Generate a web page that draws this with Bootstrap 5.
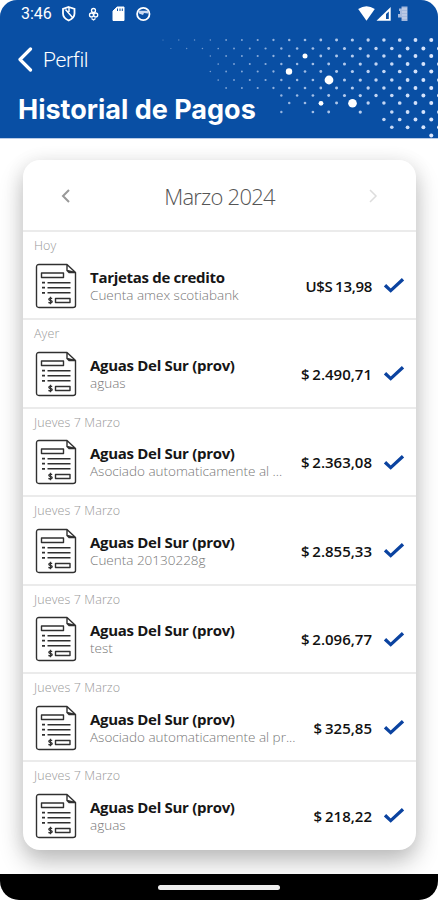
<!DOCTYPE html>
<html lang="es">
<head>
<meta charset="utf-8">
<meta name="viewport" content="width=device-width, initial-scale=1">
<title>Historial de Pagos</title>
<link href="https://cdn.jsdelivr.net/npm/bootstrap@5.3.0/dist/css/bootstrap.min.css" rel="stylesheet">
<style>
body{font-family:"Open Sans","Noto Sans",sans-serif;background:#fff;color:#111}
.screen{width:438px;height:900px;border-radius:17px 17px 19px 19px;background:#fff}
.app-head{height:138px;background:#094fa4;box-shadow:0 1px 0 #b9cbe6}
.dots{top:0;left:0}
.status{height:28px;padding:0 28px 0 21px;font:400 16px/28px Roboto,sans-serif}
.back{height:30px;margin-top:17px;padding-left:17px;font:300 21px/30px Roboto,sans-serif}
.back span{letter-spacing:-.35px}
.page-title{font:700 27px/34px Inter,sans-serif;letter-spacing:0;margin:18px 0 0 18px}
.body-area{padding:22px 22px 24px 23px}
.sheet{border-radius:17px;box-shadow:0 12px 24px rgba(0,0,0,.24),0 2px 20px rgba(0,0,0,.08);height:690px}
.month{height:70px;padding:1px 36px 0}
.month span{font:300 22px/30px "Open Sans",sans-serif;letter-spacing:-.75px;color:#555}
.pay{height:88.4px;border-top:2px solid #ebebeb;padding:5px 11px 0 12px}
.day{font-weight:300;font-size:12.5px;line-height:17px;color:#999;margin-left:-1px;letter-spacing:.1px}
.entry{margin-top:8.600px;height:46px}
.info{width:206px;margin-left:13px}
.name{font-weight:700;font-size:15px;line-height:18px;letter-spacing:-.3px;color:#161616}
.desc{font-weight:300;font-size:13.5px;line-height:18px;letter-spacing:0;color:#777}
.amount{font-weight:600;font-size:15px;line-height:20px;letter-spacing:0;word-spacing:-1px;margin-right:11px}
.amount-usd{letter-spacing:-.3px}
.home{height:26px;background:#000}
.home div{width:122px;height:5px;background:#eee;border-radius:3px}
</style>
</head>
<body>
<svg width="0" height="0" class="position-absolute">
<symbol id="doc" viewBox="0 0 42 46"><g fill="none" stroke="#303030" stroke-width="1.4" stroke-linejoin="round"><path d="M4 1.5H32L40.500 9.500V42.500Q40.500 44.500 38 44.500H4Q1.500 44.500 1.500 42V4Q1.500 1.500 4 1.500ZM32 1.500V7.500L40 9.500M32 7.500L34 9.500H40"/><path d="M6.500 10H28.500V14.500H6.500ZM20.500 35.500H35V39.500H20.500Z"/><path d="M12.500 19.700H35.500M12.500 24.700H35.500M12.500 29.800H35.500"/><path stroke-width="1.800" d="M7 19.700h3M7 24.700h3M7 29.800h3"/><path d="M17.200 35.500C15 34.400 13.400 35.600 14 36.700 14.600 37.800 17 37.200 17.200 38.600 17.300 40 15 40.300 13.400 39.400M15.500 33.800V41.300" stroke-width="1.300"/></g></symbol>
<symbol id="tick" viewBox="0 0 22 17"><path d="M2 8.200L7.700 13.600L20 2.200" fill="none" stroke="#0b43a0" stroke-width="3.300"/></symbol>
</svg>
<div class="screen d-flex flex-column overflow-hidden">
<header class="app-head position-relative text-white flex-shrink-0">
<svg class="dots position-absolute" width="438" height="138" fill="#dfeaff" aria-hidden="true"></svg>
<div class="status position-relative d-flex align-items-center">
<span>3:46</span>
<svg width="100" height="20" viewBox="57 4 100 20" fill="none" stroke="#fff" class="ms-1"><path d="M69.700 7L75.500 9V13.500Q75.500 18 69.700 20.500Q64 18 64 13.500V9Z" stroke-width="1.800"/><path d="M66.500 9.500L73.500 17.500M70 8V12" stroke-width="1.500"/><g stroke-width="1.300"><circle cx="94.500" cy="10.500" r="2"/><circle cx="92.500" cy="15" r="2"/><circle cx="96.700" cy="15" r="2"/><path d="M92.500 18.500L94.500 20L96.500 18.500"/></g><path d="M118.200 7H125V20.500H114V11Z" fill="#fff" stroke-width="1"/><path d="M118.500 8.500V11M121 8.500V11M123.300 8.500V11" stroke="#094fa4"/><circle cx="144.300" cy="14" r="6.200" stroke-width="1.800"/><path d="M139 10.800H149.600L149 13.500L145 13L144 15L140 13.500Z" fill="#c9d9f2" stroke="none"/></svg>
<svg class="ms-auto" width="52" height="18" viewBox="358 5 52 18" fill="#fff"><path d="M358.200 9Q366.500 3.500 374.800 9L366.500 20.700Z"/><path d="M376.500 20.700L390.700 7V20.700Z"/><path d="M386 14L388.800 11.500V19H386Z" fill="#094fa4"/><path d="M401.500 6.500H407.500V21H401.500V17.500H398V14H400V11H399V8.500H401.500Z" fill="#a5b9dd"/><path d="M402 9H407M402 12H407M402 15H407M402 18H407" stroke="#d0d8ec"/></svg>
</div>
<div class="back position-relative d-flex align-items-center"><svg width="18" height="26" viewBox="0 0 18 26" fill="none" stroke="#fff" stroke-width="3.200" stroke-linecap="round" stroke-linejoin="round"><path d="M13.500 2L3 12.500L13.500 23"/></svg><span class="ms-2">Perfil</span></div>
<h1 class="page-title position-relative">Historial de Pagos</h1>
</header>
<main class="body-area flex-grow-1">
<section class="sheet bg-white">
<div class="month d-flex align-items-center justify-content-between"><svg width="14" height="16" viewBox="0 0 14 16" fill="none" stroke="#999" stroke-width="2"><path d="M10 2L4 8L10 14"/></svg><span>Marzo 2024</span><svg width="14" height="16" viewBox="0 0 14 16" fill="none" stroke="#ddd" stroke-width="1.500"><path d="M4 2L10 8L4 14"/></svg></div>
<div id="payments"></div>
</section>
</main>
<footer class="home d-flex justify-content-center align-items-center flex-shrink-0"><div></div></footer>
</div>
<script src="https://cdn.jsdelivr.net/npm/bootstrap@5.3.0/dist/js/bootstrap.bundle.min.js"></script>
<script>
const payments = [
  ["Hoy","Tarjetas de credito","Cuenta amex scotiabank","U$S 13,98"],
  ["Ayer","Aguas Del Sur (prov)","aguas","$ 2.490,71"],
  ["Jueves 7 Marzo","Aguas Del Sur (prov)","Asociado automaticamente al ...","$ 2.363,08"],
  ["Jueves 7 Marzo","Aguas Del Sur (prov)","Cuenta 20130228g","$ 2.855,33"],
  ["Jueves 7 Marzo","Aguas Del Sur (prov)","test","$ 2.096,77"],
  ["Jueves 7 Marzo","Aguas Del Sur (prov)","Asociado automaticamente al pr...","$ 325,85"],
  ["Jueves 7 Marzo","Aguas Del Sur (prov)","aguas","$ 218,22"]
];
document.getElementById("payments").innerHTML = payments.map(([day,name,desc,amount]) => `
<article class="pay"><div class="day">${day}</div>
<div class="entry d-flex align-items-center"><svg width="42" height="46" class="flex-shrink-0"><use href="#doc"/></svg>
<div class="info flex-shrink-0 text-nowrap"><div class="name">${name}</div><div class="desc">${desc}</div></div>
<div class="amount ms-auto text-nowrap ${amount.startsWith("U") ? "amount-usd" : ""}">${amount}</div><svg width="22" height="17" class="flex-shrink-0"><use href="#tick"/></svg></div></article>`).join("");

// Halftone pattern: [y, first column, skipped columns]; columns are half a pitch apart
const pitch = 7.89, rows = [[40,0],[48.5,1],[56,6],[64,7],[71.500,6],[80,7],[88,8],[95.500,15],[103,16],[112,15,[17,23,27]],[119.500,28],[127.300,29],[135.500,34]];
let circles = "";
for (const [y,first,skip=[]] of rows)
  for (let c = first; c <= 35; c += 2)
    if (!skip.includes(c)) circles += `<circle cx="${163+c*pitch}" cy="${y}" r="${.55+c*.043}" opacity="${.4+c*.017}"/>`;
for (const [x,y,r] of [[305,56,2.5],[289,71.500,3.200],[329,80,4.400],[321,103.300,2.400],[352.500,103.300,4.300]])
  circles += `<circle cx="${x}" cy="${y}" r="${r}" fill="#fff"/>`;
document.querySelector(".dots").innerHTML = circles;
</script>
</body>
</html>
